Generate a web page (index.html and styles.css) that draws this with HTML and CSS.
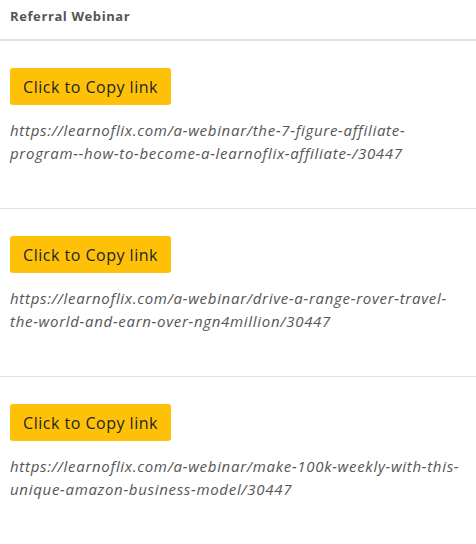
FILE: index.html
```html
<!DOCTYPE html>
<html>
<head>
<meta charset="utf-8">
<link rel="stylesheet" href="styles.css">
</head>
<body>
<div class="card">
  <div class="card-header">Referral Webinar</div>
  <div class="item">
    <button class="copy-btn">Click to Copy link</button>
    <p class="url">https://learnoflix.com/a-webinar/the-7-figure-affiliate-program--how-to-become-a-learnoflix-affiliate-/30447</p>
  </div>
  <div class="item">
    <button class="copy-btn">Click to Copy link</button>
    <p class="url">https://learnoflix.com/a-webinar/drive-a-range-rover-travel-the-world-and-earn-over-ngn4million/30447</p>
  </div>
  <div class="item">
    <button class="copy-btn">Click to Copy link</button>
    <p class="url">https://learnoflix.com/a-webinar/make-100k-weekly-with-this-unique-amazon-business-model/30447</p>
  </div>
</div>
</body>
</html>
```
FILE: styles.css
```css
* { box-sizing: border-box; }
html, body { margin: 0; padding: 0; background: #fff; }
body { font-family: "Open Sans", "DejaVu Sans", sans-serif; color: #212529; }
.card { width: 476px; }
.card-header {
  height: 41px;
  padding: 7px 10px 0;
  font-size: 13px;
  font-weight: 700;
  letter-spacing: 0.6px;
  color: #555;
  border-bottom: 2px solid #dee2e6;
}
.item {
  padding: 27px 10px 0;
  height: 168px;
  border-bottom: 1px solid #e3e3e3;
}
.item:first-of-type { height: 167px; }
.copy-btn {
  display: block;
  height: 37px;
  width: 161px;
  padding: 0;
  border: none;
  border-radius: 3px;
  background: #ffc107;
  color: #212529;
  font-family: inherit;
  font-size: 16px;
  font-weight: 400;
  letter-spacing: 0.5px;
}
.url {
  margin: 14px 0 0;
  font-size: 15px;
  font-style: italic;
  line-height: 23px;
  letter-spacing: 0.7px;
  color: #555;
}
```
